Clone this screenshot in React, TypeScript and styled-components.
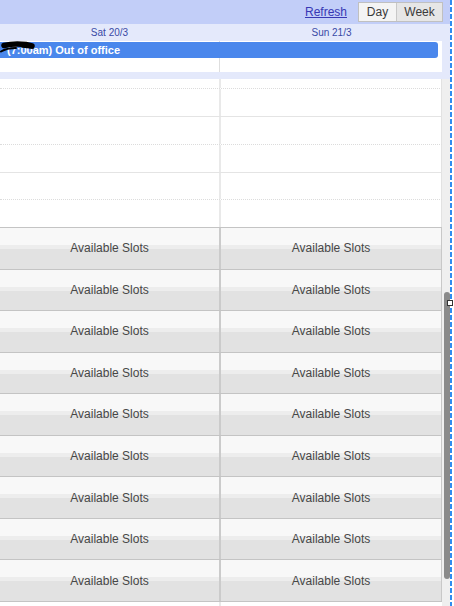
import React from "react";
import styled, { createGlobalStyle, css } from "styled-components";

const GlobalStyle = createGlobalStyle`
  html, body { margin: 0; padding: 0; background: #ffffff; }
  body { font-family: "Liberation Sans", Arial, sans-serif; }
  * { box-sizing: border-box; }
`;

const Frame = styled.div`
  position: relative;
  display: flex;
  width: 454px;
  height: 606px;
  overflow: hidden;
  background: #ffffff;
`;

const Main = styled.div`
  width: 450px;
  height: 606px;
  display: flex;
  flex-direction: column;
`;

const DashedEdge = styled.div`
  width: 2px;
  height: 606px;
  background: repeating-linear-gradient(to bottom, #2f8cf0 0 5px, transparent 5px 7px);
`;

const TopBar = styled.div`
  height: 24px;
  background: #c2cef8;
  display: flex;
  align-items: center;
  justify-content: flex-end;
  padding-right: 7px;
`;

const RefreshLink = styled.a`
  font-size: 12px;
  color: #3838b4;
  text-decoration: underline;
  margin-right: 11px;
  cursor: pointer;
`;

const ButtonGroup = styled.div`
  display: flex;
  height: 20px;
  border: 1px solid #c0c0c0;
`;

const ViewButton = styled.div<{ $active?: boolean; $w: number }>`
  width: ${(p) => p.$w}px;
  display: flex;
  align-items: center;
  justify-content: center;
  font-size: 12px;
  color: #3a3a3a;
  background: ${(p) => (p.$active ? "#e6e6e6" : "#f4f4f4")};
  & + & {
    border-left: 1px solid #c8c8c8;
  }
`;

const HeaderPanel = styled.div`
  background: #e4e9fb;
  padding-right: 8px;
  padding-bottom: 7px;
`;

const cols = css`
  display: grid;
  grid-template-columns: 219px 2px 1fr;
`;

const DateRow = styled.div`
  ${cols};
  height: 17px;
  align-items: center;
`;

const DateLabel = styled.div<{ $col: number }>`
  grid-column: ${(p) => p.$col};
  text-align: center;
  font-size: 10px;
  color: #3a4aa6;
`;

const AllDayBox = styled.div`
  ${cols};
  grid-template-rows: 1px 16px 1fr;
  height: 31px;
  background: #ffffff;
`;

const AllDayDivider = styled.div`
  grid-column: 2;
  grid-row: 1 / -1;
  width: 1px;
  background: #dedede;
`;

const EventBar = styled.div`
  position: relative;
  grid-column: 1 / -1;
  grid-row: 2;
  margin-right: 4px;
  background: #4a87ec;
  border-radius: 0 3px 3px 0;
  color: #ffffff;
  font-size: 11px;
  font-weight: bold;
  line-height: 16px;
  padding-left: 7px;
  white-space: nowrap;
`;

const Redaction = styled.svg`
  position: absolute;
  left: 0;
  top: -1px;
`;

const Body = styled.div`
  flex: 1;
  display: flex;
  min-height: 0;
`;

const Grid = styled.div`
  width: 442px;
  display: flex;
  flex-direction: column;
`;

const EmptyRow = styled.div<{ $h: number; $line?: "dotted" | "solid" | "none" }>`
  ${cols};
  height: ${(p) => p.$h}px;
  border-right: 1px solid #e2e2e2;
  border-bottom: ${(p) =>
    p.$line === "dotted"
      ? "1px dotted #dcdcdc"
      : p.$line === "solid"
      ? "1px solid #e4e4e4"
      : "none"};
`;

const LightDivider = styled.div`
  grid-column: 2;
  background: #e9e9e9;
`;

const SlotRow = styled.div`
  ${cols};
  height: 41.56px;
  border-top: 1px solid #c4c4c4;
  border-right: 1px solid #c8c8c8;
`;

const SlotCell = styled.div`
  display: flex;
  align-items: center;
  justify-content: center;
  font-size: 12px;
  color: #474747;
  background: linear-gradient(
    to bottom,
    #f8f8f8 0%,
    #f8f8f8 42%,
    #ededed 42%,
    #ededed 52%,
    #e2e2e2 52%,
    #e2e2e2 100%
  );
`;

const SlotDivider = styled.div`
  background: #cbcbcb;
`;

const TailRow = styled.div`
  ${cols};
  flex: 1;
  border-top: 1px solid #c4c4c4;
`;

const Gutter = styled.div`
  width: 8px;
  background: #efefef;
  padding-top: 213px;
`;

const Thumb = styled.div`
  margin-left: 2px;
  width: 6px;
  height: 287px;
  background: #8a8a8a;
  border-radius: 3px;
`;

const Handle = styled.div`
  position: absolute;
  left: 447px;
  top: 300px;
  width: 6px;
  height: 6px;
  background: #ffffff;
  border: 1px solid #333333;
`;

const emptyRows: { h: number; line: "dotted" | "solid" | "none" }[] = [
  { h: 10, line: "dotted" },
  { h: 28, line: "solid" },
  { h: 28, line: "dotted" },
  { h: 28, line: "solid" },
  { h: 27, line: "dotted" },
  { h: 27, line: "none" },
];

export default function App() {
  const slots = Array.from({ length: 9 });
  return (
    <>
      <GlobalStyle />
      <Frame>
        <Main>
          <TopBar>
            <RefreshLink>Refresh</RefreshLink>
            <ButtonGroup>
              <ViewButton $w={37}>Day</ViewButton>
              <ViewButton $w={46} $active>
                Week
              </ViewButton>
            </ButtonGroup>
          </TopBar>
          <HeaderPanel>
            <DateRow>
              <DateLabel $col={1}>Sat 20/3</DateLabel>
              <DateLabel $col={3}>Sun 21/3</DateLabel>
            </DateRow>
            <AllDayBox>
              <AllDayDivider />
              <EventBar>
                (7:00am) Out of office
                <Redaction width="36" height="14" viewBox="0 0 36 14">
                  <path
                    d="M4 4.5 C10 3, 18 2.5, 26 3.5 L32 5"
                    stroke="#000"
                    strokeWidth="5.5"
                    fill="none"
                    strokeLinecap="round"
                  />
                  <path
                    d="M1 10.5 C5 8, 10 7, 16 7"
                    stroke="#000"
                    strokeWidth="2"
                    fill="none"
                    strokeLinecap="round"
                  />
                  <path
                    d="M22 6 L33 7"
                    stroke="#000"
                    strokeWidth="1.5"
                    fill="none"
                    strokeLinecap="round"
                  />
                </Redaction>
              </EventBar>
            </AllDayBox>
          </HeaderPanel>
          <Body>
            <Grid>
              {emptyRows.map((r, i) => (
                <EmptyRow key={i} $h={r.h} $line={r.line}>
                  <div />
                  <LightDivider />
                  <div />
                </EmptyRow>
              ))}
              {slots.map((_, i) => (
                <SlotRow key={i}>
                  <SlotCell>Available Slots</SlotCell>
                  <SlotDivider />
                  <SlotCell>Available Slots</SlotCell>
                </SlotRow>
              ))}
              <TailRow>
                <div />
                <LightDivider />
                <div />
              </TailRow>
            </Grid>
            <Gutter>
              <Thumb />
            </Gutter>
          </Body>
        </Main>
        <DashedEdge />
        <Handle />
      </Frame>
    </>
  );
}
